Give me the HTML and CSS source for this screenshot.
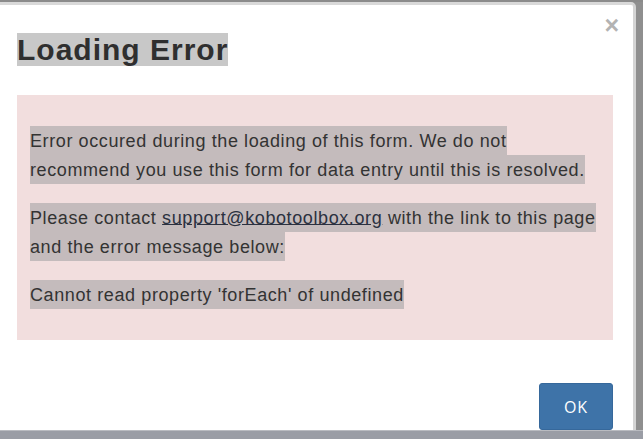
FILE: index.html
```html
<!DOCTYPE html>
<html>
<head>
<meta charset="utf-8">
<link rel="stylesheet" href="styles.css">
</head>
<body>
<div class="screen">
  <div class="top-strip"></div>
  <div class="main">
    <div class="dialog">
      <button class="close" type="button">×</button>
      <h3 class="title"><span class="sel-title">Loading Error </span></h3>
      <div class="alert">
        <p><span class="sel">Error occured during the loading of this form. We do not recommend you use this form for data entry until this is resolved.</span></p>
        <p><span class="sel">Please contact <a class="link" href="#">support@kobotoolbox.org</a> with the link to this page and the error message below:</span></p>
        <p><span class="sel">Cannot read property 'forEach' of undefined</span></p>
      </div>
      <div class="footer">
        <button class="ok" type="button">OK</button>
      </div>
    </div>
    <div class="right-strip"></div>
  </div>
  <div class="bottom-band"></div>
</div>
</body>
</html>
```

FILE: styles.css
```css
* { box-sizing: border-box; }
html, body { margin: 0; padding: 0; }
body {
  width: 643px;
  height: 439px;
  overflow: hidden;
  background: #8e8e8e;
  font-family: "Liberation Sans", Arial, sans-serif;
  color: #333;
}
.screen {
  display: flex;
  flex-direction: column;
  width: 643px;
  height: 439px;
}
.top-strip {
  height: 2px;
  background: #8b8b8b;
  flex: none;
}
.main {
  display: flex;
  flex: 1;
  min-height: 0;
}
.dialog {
  position: relative;
  width: 636px;
  flex: none;
  background: #fff;
  border-top: 3px solid #d9d9d9;
  border-right: 3px solid #d4d4d4;
  border-top-right-radius: 5px;
  padding: 0 20px 0 17px;
  display: flex;
  flex-direction: column;
}
.right-strip {
  flex: 1;
  background: #8f8f8f;
}
.bottom-band {
  height: 9px;
  flex: none;
  background: #9a9da5;
  border-top: 1px solid #b9bbc0;
}
.close {
  position: absolute;
  top: 8px;
  right: 14px;
  border: 0;
  background: none;
  padding: 0;
  font-family: "Liberation Sans", Arial, sans-serif;
  font-size: 25px;
  font-weight: bold;
  line-height: 25px;
  color: #b3b3b3;
  cursor: pointer;
}
.title {
  margin: 28px 0 0 0;
  font-size: 30px;
  line-height: 34px;
  font-weight: bold;
  letter-spacing: 1px;
  color: #2f2f2f;
}
.sel-title {
  background: #c8c8c8;
}
.alert {
  margin-top: 28px;
  background: #f2dede;
  padding: 31px 10px 31px 13px;
  font-size: 18px;
  line-height: 29px;
  letter-spacing: 0.6px;
}
.alert p {
  margin: 0 0 19px 0;
}
.alert p:last-child {
  margin-bottom: 0;
}
.sel {
  background: #c4bbbc;
  padding: 4.5px 0;
  color: #333;
}
.link {
  color: #2b3140;
  text-decoration: underline;
}
.footer {
  display: flex;
  justify-content: flex-end;
  margin-top: 43px;
}
.ok {
  width: 74px;
  height: 47px;
  border: 1px solid #36689b;
  border-radius: 3px;
  background: #3e73a8;
  color: #fff;
  font-family: "Open Sans", "Noto Sans", sans-serif;
  font-size: 16px;
  letter-spacing: 1px;
  padding: 0;
  cursor: pointer;
}
```
